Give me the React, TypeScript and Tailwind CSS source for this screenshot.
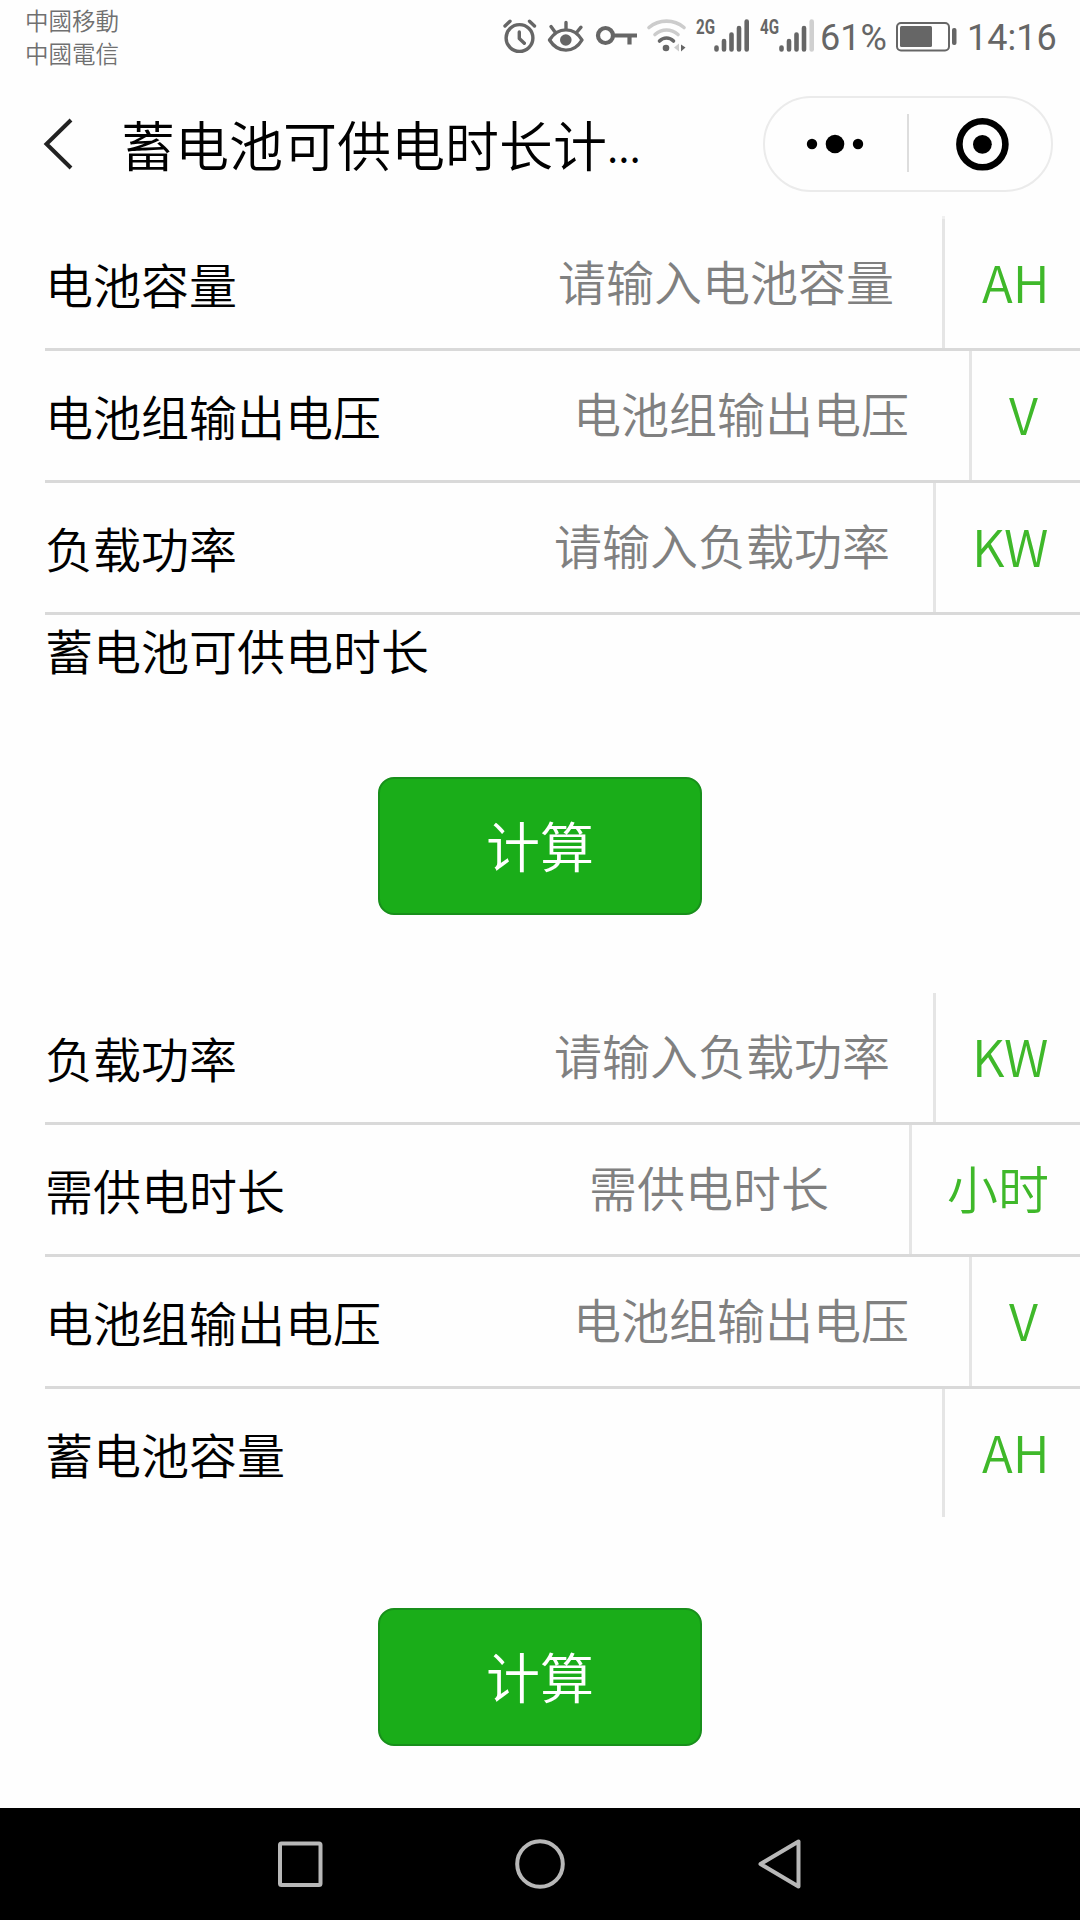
import React from "react";

type RowProps = {
  label: string;
  placeholder?: string;
  unit: string;
  placeholderClass?: string;
  unitClass: string;
  last?: boolean;
};

function Row({ label, placeholder, unit, placeholderClass = "", unitClass, last }: RowProps) {
  return (
    <div className={`ml-[45px] flex ${last ? "h-[128px]" : "h-[132px] border-b-[3px] border-[#d9d9d9]"}`}>
      <div className={`flex flex-1 items-center whitespace-nowrap ${last ? "pt-[2px]" : ""}`}>
        <span className="w-[500px] pb-[2px] text-black">{label}</span>
        <span className={`pb-[7px] text-[#808080] ${placeholderClass}`}>{placeholder}</span>
      </div>
      <div
        className={`flex items-center whitespace-nowrap border-l-[3px] border-[#e5e5e5] pb-[4px] text-[51px] text-[#3fb82a] ${unitClass}`}
      >
        {unit}
      </div>
    </div>
  );
}

function CalcButton() {
  return (
    <button className="flex h-[138px] w-[324px] items-center justify-center self-center rounded-[16px] border-2 border-[#188f1b] bg-[#1aad19] pb-[3px] text-[54px] leading-none text-white">
      计算
    </button>
  );
}

function StatusBar() {
  const c = "#666666";
  return (
    <div className="flex h-[80px] justify-between text-[#666]">
      <div className="ml-[25px] mt-[4px] text-[23.5px] leading-[33px] text-[#707070]">
        <div>中國移動</div>
        <div>中國電信</div>
      </div>
      <div className="flex">
        <svg className="h-[80px] w-[320px]" viewBox="500 0 320 80" fill="none" stroke={c} strokeLinecap="round" strokeLinejoin="round">
          <g strokeWidth="3.4">
            <circle cx="519.5" cy="38" r="13.4" />
            <path d="M519.3 32v6.5l5 4.8M505 26l5-4.800M529.500 21.200l5 4.800" />
          </g>
          <g strokeWidth="3.4">
            <path d="M549.500 40C558 26.500 574 26.500 582 40C574 53.500 558 53.500 549.500 40Z" />
            <path d="M566 28.500V22.500M555 32l-4-5.500M577 32l4-4.800" />
            <circle cx="565.800" cy="40" r="5.800" fill={c} stroke="none" />
          </g>
          <g strokeWidth="4.200" strokeLinecap="butt">
            <circle cx="605.500" cy="35.500" r="7.500" />
            <path d="M613 35.500H637M629.500 36v8.500" />
          </g>
          <path d="M649 27.500C659 19 674 19 684 27.500M655 34.500C662 28.500 671 28.500 678 34.500" stroke="#cccccc" strokeWidth="3.6" />
          <path d="M659.500 41C663.500 37 669.500 37 673.500 41" strokeWidth="3.600" />
          <circle cx="666" cy="48" r="3.300" fill={c} stroke="none" />
          <path d="M679 43.500v8l-5-4z" fill="#ccc" stroke="none" />
          <path d="M681 44.500l4.500 3-4.500 4z" fill={c} stroke="none" />
          <g fill={c} stroke="none" fontFamily="Roboto, sans-serif" fontSize="20.500" fontWeight="700">
            <text x="696" y="33.500" textLength="19" lengthAdjust="spacingAndGlyphs">2G</text>
            <text x="760" y="33.500" textLength="19" lengthAdjust="spacingAndGlyphs">4G</text>
          </g>
          <g strokeWidth="4.600">
            <path d="M716.500 47.500v2M724 41v8.500M731.500 34.500v15M739 28v21.500M746.700 21.500v28" />
            <path d="M781.500 47.500v2M789 41v8.500M796.500 34.500v15M804 28v21.500" />
            <path d="M811.700 21.500v28" stroke="#d0d0d0" />
          </g>
        </svg>
        <span className="mt-[15px] w-[75px] pt-[1px] text-[36px] font-normal leading-[44px] [font-family:Roboto,sans-serif]">61%</span>
        <svg className="h-[80px] w-[65px]" viewBox="895 0 65 80">
          <rect x="897" y="23" width="52" height="27.500" rx="4" fill="none" stroke={c} strokeWidth="2" />
          <rect x="900" y="26" width="32" height="21" rx="1.500" fill={c} />
          <rect x="952" y="28" width="4.500" height="17" rx="2" fill={c} />
        </svg>
        <span className="mt-[15px] w-[120px] pl-[7px] pt-[1px] text-[36px] font-normal leading-[44px] [font-family:Roboto,sans-serif]">14:16</span>
      </div>
    </div>
  );
}

export default function App() {
  return (
    <div className="flex h-[1920px] w-[1080px] flex-col overflow-hidden bg-[#fefefe] text-[48px] font-[350] leading-none [font-family:'Noto_Sans_CJK_SC',sans-serif]">
      <StatusBar />
      <header className="flex h-[136px] pt-[16px]">
        <svg className="ml-[40px] h-[96px] w-[40px]" viewBox="40 96 40 96" fill="none" stroke="#222" strokeWidth="4">
          <path d="M71 120L46.500 144L71 168" />
        </svg>
        <h1 className="ml-[41px] flex h-[96px] w-[642px] items-center whitespace-nowrap pb-[1px] text-[54px] font-[350] leading-none text-black">
          蓄电池可供电时长计<span className="text-[42px]">...</span>
        </h1>
        <div className="flex h-[96px] w-[290px] items-center rounded-full border-2 border-[#ebebeb]">
          <svg className="h-[92px] w-[286px]" viewBox="765 98 286 92">
            <circle cx="812" cy="144" r="5.200" />
            <circle cx="835" cy="144" r="9.300" />
            <circle cx="858" cy="144" r="5.200" />
            <path d="M908 114V172" stroke="#ddd" strokeWidth="2" />
            <circle cx="982.400" cy="144.300" r="23" fill="none" stroke="#000" strokeWidth="6.600" />
            <circle cx="982.400" cy="144.300" r="9.400" />
          </svg>
        </div>
      </header>

      <section className="flex flex-col">
        <div className="h-[3px]">
          <div className="ml-[942px] h-full w-[3px] bg-[#f0f0f0]" />
        </div>
        <Row label="电池容量" placeholder="请输入电池容量" unit="AH" placeholderClass="pl-[13px]" unitClass="w-[138px] pl-[37px]" />
        <Row label="电池组输出电压" placeholder="电池组输出电压" unit="V" placeholderClass="pl-[28px]" unitClass="w-[111px] pl-[37px]" />
        <Row label="负载功率" placeholder="请输入负载功率" unit="KW" placeholderClass="pl-[9px]" unitClass="w-[147px] pl-[36px]" />
        <div className="ml-[45px] flex h-[76px] items-center pb-[8px] text-black">蓄电池可供电时长</div>
      </section>
      <div className="mt-[86px] flex flex-col">
        <CalcButton />
      </div>

      <section className="mt-[78px] flex flex-col">
        <Row label="负载功率" placeholder="请输入负载功率" unit="KW" placeholderClass="pl-[9px]" unitClass="w-[147px] pl-[36px]" />
        <Row label="需供电时长" placeholder="需供电时长" unit="小时" placeholderClass="pl-[44px]" unitClass="w-[171px] pl-[35px]" />
        <Row label="电池组输出电压" placeholder="电池组输出电压" unit="V" placeholderClass="pl-[28px]" unitClass="w-[111px] pl-[37px]" />
        <Row label="蓄电池容量" unit="AH" unitClass="w-[138px] pl-[37px]" last />
      </section>
      <div className="mt-[91px] flex flex-col">
        <CalcButton />
      </div>

      <nav className="mt-auto flex h-[112px] items-center justify-center gap-[180px] bg-black">
        <svg className="size-[60px]" viewBox="0 0 60 60" fill="none" stroke="#b8b8b8" strokeWidth="4">
          <rect x="10" y="9.500" width="40.500" height="41.500" rx="1.500" />
        </svg>
        <svg className="size-[60px]" viewBox="0 0 60 60" fill="none" stroke="#b8b8b8" strokeWidth="4">
          <circle cx="30" cy="30" r="22.800" />
        </svg>
        <svg className="size-[60px]" viewBox="0 0 60 60" fill="none" stroke="#b8b8b8" strokeWidth="4" strokeLinejoin="round">
          <path d="M48.500 7.500V52.500L10.500 30Z" />
        </svg>
      </nav>
    </div>
  );
}
